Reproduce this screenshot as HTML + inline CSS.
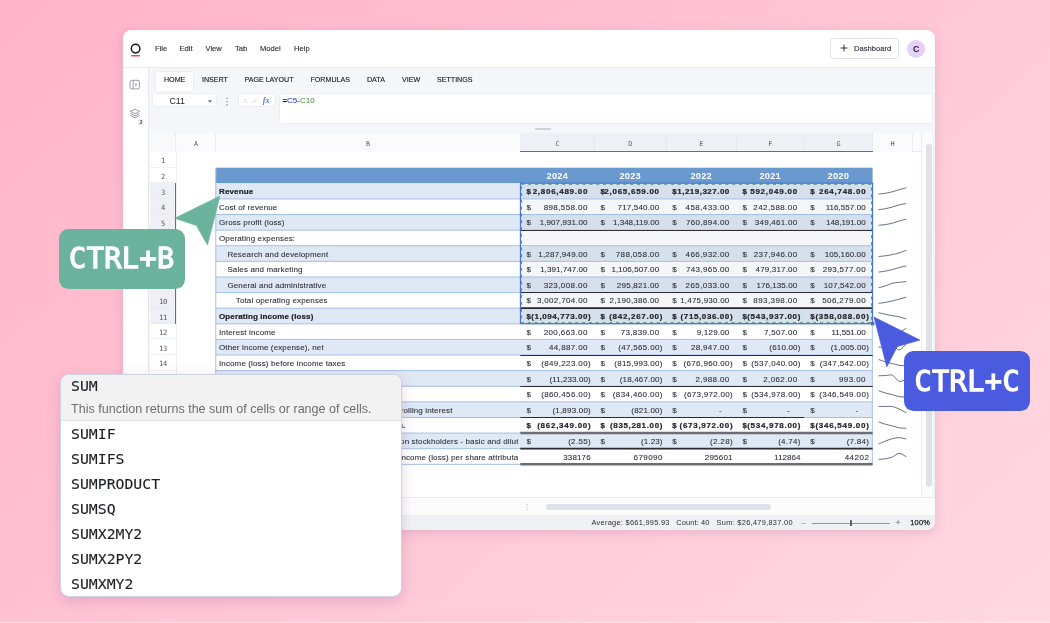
<!DOCTYPE html>
<html lang="en"><head><meta charset="utf-8"><title>Spreadsheet shortcuts</title>
<style>
*{box-sizing:border-box;margin:0;padding:0}
html,body{width:1050px;height:623px;overflow:hidden}
body{position:relative;font-family:"Liberation Sans",sans-serif;color:#1f2430;
 background:linear-gradient(138deg,#ffb3c9 0%,#ffd9e2 100%);}
.abs{position:absolute}
.menu{position:absolute;font-size:7.6px;-webkit-text-stroke:.12px #2b2f3a;color:#2b2f3a;line-height:9px;white-space:nowrap}
.tab{position:absolute;font-size:7.1px;-webkit-text-stroke:.15px #23262f;color:#23262f;line-height:9px;white-space:nowrap}
.cell{position:absolute;font-size:8px;letter-spacing:.125px;line-height:15.6px;white-space:nowrap;overflow:hidden;color:#2a2d36;padding-top:.9px}
.num{position:absolute;font-size:8px;letter-spacing:.07px;line-height:15.6px;white-space:nowrap;color:#2a2d36;text-align:right;padding-top:.9px}
.num.b{letter-spacing:.8px}
.cell,.num{-webkit-text-stroke:.1px #3a3d46}
.b{font-weight:bold;color:#23252c;-webkit-text-stroke:.22px #23252c}
.rh{position:absolute;font-family:"DejaVu Sans Mono","Liberation Mono",monospace;font-size:7.2px;letter-spacing:-.3px;padding-top:1.4px;line-height:15.6px;text-align:center;color:#555a68;background:#fff;border-bottom:1px solid #f0f1f5}
.rh.sel{background:#eff0f5;border-bottom-color:#e9ebf0}
.ch{position:absolute;font-family:"DejaVu Sans Mono","Liberation Mono",monospace;font-size:6.8px;line-height:19.6px;padding-top:1.7px;text-align:center;color:#5c6170;background:#fbfbfd;border-right:1px solid #eceef3}
.ch.sel{background:#eff0f5;border-right-color:#e6e8ee}
.fn{position:absolute;font-family:"DejaVu Sans Mono","Liberation Mono",monospace;font-size:14.8px;line-height:18px;color:#1e1f24;-webkit-text-stroke:.12px #1e1f24;white-space:nowrap}
.kbd{position:absolute;font-family:"DejaVu Sans Mono","Liberation Mono",monospace;font-weight:normal;-webkit-text-stroke:1.3px #fff;color:#fff;text-align:center;white-space:nowrap}
</style></head><body>
<div id="root" style="position:absolute;left:0;top:0;width:1050px;height:623px;will-change:transform">

<div class="abs" style="left:122.6px;top:30px;width:812.2px;height:499.8px;background:#f5f6f9;border-radius:8.5px;box-shadow:0 3px 12px rgba(130,80,140,.2)"></div>
<div class="abs" style="left:122.6px;top:30px;width:812.2px;height:38.3px;background:#fff;border-radius:9px 9px 0 0;border-bottom:1px solid #e9ebf0"></div>
<svg class="abs" style="left:129.6px;top:39.9px" width="14" height="20" viewBox="0 0 14 20"><circle cx="5.6" cy="8.6" r="4.3" fill="none" stroke="#15161a" stroke-width="1.45"/><rect x="1.1" y="15.1" width="9" height="1.3" rx=".6" fill="#f0417c"/></svg>
<span class="menu" style="left:155px;top:43.9px;">File</span>
<span class="menu" style="left:179.5px;top:43.9px;">Edit</span>
<span class="menu" style="left:205.5px;top:43.9px;">View</span>
<span class="menu" style="left:235px;top:43.9px;">Tab</span>
<span class="menu" style="left:260px;top:43.9px;">Model</span>
<span class="menu" style="left:294px;top:43.9px;">Help</span>
<div class="abs" style="left:830px;top:38px;width:69.4px;height:21px;border:1px solid #dfe2ea;border-radius:3.5px;background:#fff"></div>
<svg class="abs" style="left:838.5px;top:43px" width="10" height="10" viewBox="0 0 10 10"><path d="M5 1.5v7M1.5 5h7" stroke="#22252e" stroke-width="0.9" fill="none"/></svg>
<span class="menu" style="left:854px;top:43.5px;">Dashboard</span>
<div class="abs" style="left:907.2px;top:39.5px;width:18px;height:18px;border-radius:50%;background:linear-gradient(45deg,#d8dcff,#f1c4f4);font-size:8.8px;font-weight:bold;line-height:18.4px;text-align:center;color:#2a2440">C</div>
<div class="abs" style="left:122.6px;top:68.3px;width:26.9px;height:461.5px;background:#fff;border-right:1px solid #e6e8ee;border-radius:0 0 0 9px"></div>
<svg class="abs" style="left:129.3px;top:79.3px" width="12" height="12" viewBox="0 0 12 12"><rect x="1" y="1.3" width="9.4" height="8.6" rx="1.4" fill="none" stroke="#7f8798" stroke-width=".8"/><path d="M4.2 1.3v8.6" stroke="#7f8798" stroke-width=".8"/><path d="M6.6 4.4l1.5 1.2-1.5 1.2z" fill="none" stroke="#7f8798" stroke-width=".6"/></svg>
<svg class="abs" style="left:128.6px;top:108.3px" width="13" height="13" viewBox="0 0 13 13"><path d="M6 1.2l4.6 2.2L6 5.6 1.4 3.4z M1.4 5.5L6 7.7l4.6-2.2 M1.4 7.5L6 9.7l4.6-2.2" fill="none" stroke="#7f8798" stroke-width=".8" stroke-linejoin="round"/></svg>
<div class="abs" style="left:138.2px;top:118.6px;width:6px;height:7px;border-radius:2px;background:#eff0f4;font-size:4.8px;line-height:7px;font-weight:bold;text-align:center;color:#4b5060">2</div>
<div class="abs" style="left:155.3px;top:71.4px;width:38.7px;height:19.2px;background:#fff;border:1px solid #eceef3;border-bottom:none;border-radius:4px 4px 0 0"></div>
<span class="tab" style="left:164px;top:76px;">HOME</span>
<span class="tab" style="left:202px;top:76px;">INSERT</span>
<span class="tab" style="left:244.5px;top:76px;">PAGE LAYOUT</span>
<span class="tab" style="left:310.5px;top:76px;">FORMULAS</span>
<span class="tab" style="left:367px;top:76px;">DATA</span>
<span class="tab" style="left:402px;top:76px;">VIEW</span>
<span class="tab" style="left:437px;top:76px;">SETTINGS</span>
<div class="abs" style="left:152.2px;top:93.3px;width:64.7px;height:14.2px;background:#fff;border:1px solid #eceef3;border-radius:3px"></div>
<span class="abs" style="left:169.5px;top:96px;font-size:8.8px;line-height:10px;color:#1f2128">C11</span>
<svg class="abs" style="left:207.2px;top:98.5px" width="6" height="5" viewBox="0 0 6 5"><path d="M.9 1.2h4.2L3 3.8z" fill="#6a6f7c"/></svg>
<svg class="abs" style="left:224.6px;top:96px" width="4" height="12" viewBox="0 0 4 12"><circle cx="2" cy="2.2" r=".65" fill="#555a67"/><circle cx="2" cy="5.6" r=".65" fill="#555a67"/><circle cx="2" cy="9" r=".65" fill="#555a67"/></svg>
<div class="abs" style="left:237.8px;top:93.3px;width:38.6px;height:14.2px;background:#fff;border:1px solid #eceef3;border-radius:3px"></div>
<svg class="abs" style="left:241px;top:95px" width="34" height="12" viewBox="0 0 34 12"><path d="M2.2 3.4l4.2 4.6M6.4 3.4l-4.2 4.6" stroke="#d5d8df" stroke-width=".8" fill="none"/><path d="M10.2 6l2 2.1 3.6-4.6" stroke="#d5d8df" stroke-width=".8" fill="none"/></svg>
<span class="abs" style="left:262.8px;top:95.2px;font-family:'Liberation Serif',serif;font-style:italic;font-weight:bold;font-size:8.4px;line-height:11px;color:#5b86c9">fx</span>
<div class="abs" style="left:279.2px;top:92.8px;width:653.6px;height:31px;background:#fff;border:1px solid #eceef3;border-radius:4px"></div>
<span class="abs" style="left:282.4px;top:95.6px;font-size:8px;line-height:9px;white-space:nowrap;color:#111"><b>=</b><span style="color:#1f2bd6">C5</span>-<span style="color:#3d8a2a">C10</span></span>
<div class="abs" style="left:535px;top:127.7px;width:15.6px;height:2.2px;background:#cdd0d8;border-radius:1px"></div>
<div class="abs" style="left:150px;top:132.8px;width:771.5px;height:364.4px;background:#fff;border-top:1px solid #e9ebf0"></div>
<div class="abs" style="left:150px;top:133.4px;width:771.5px;height:19px;background:#fbfbfd;border-bottom:1px solid #e9ebf0"></div>
<div class="abs" style="left:150px;top:133.4px;width:26px;height:18.6px;background:#f9f9fb;border-right:1px solid #eceef3"></div>
<div class="ch" style="left:176.6px;top:133.4px;width:39.8px;height:18.6px;">A</div>
<div class="ch" style="left:216.4px;top:133.4px;width:304.5px;height:18.6px;">B</div>
<div class="ch sel" style="left:520.9px;top:133.4px;width:74.1px;height:18.6px;">C</div>
<div class="ch sel" style="left:595px;top:133.4px;width:71.7px;height:18.6px;">D</div>
<div class="ch sel" style="left:666.7px;top:133.4px;width:70.2px;height:18.6px;">E</div>
<div class="ch sel" style="left:736.9px;top:133.4px;width:67.8px;height:18.6px;">F</div>
<div class="ch sel" style="left:804.7px;top:133.4px;width:68.5px;height:18.6px;">G</div>
<div class="ch" style="left:873.2px;top:133.4px;width:39.8px;height:18.6px;">H</div>
<div class="abs" style="left:520.3px;top:150.8px;width:352.3px;height:1.5px;background:#3f6fd8"></div>
<div class="rh" style="left:150px;top:152.1px;width:26px;height:15.61px;">1</div>
<div class="rh" style="left:150px;top:167.71px;width:26px;height:15.61px;">2</div>
<div class="rh sel" style="left:150px;top:183.32px;width:26px;height:15.61px;">3</div>
<div class="rh sel" style="left:150px;top:198.93px;width:26px;height:15.61px;">4</div>
<div class="rh sel" style="left:150px;top:214.54px;width:26px;height:15.61px;">5</div>
<div class="rh sel" style="left:150px;top:230.15px;width:26px;height:15.61px;">6</div>
<div class="rh sel" style="left:150px;top:245.76px;width:26px;height:15.61px;">7</div>
<div class="rh sel" style="left:150px;top:261.37px;width:26px;height:15.61px;">8</div>
<div class="rh sel" style="left:150px;top:276.98px;width:26px;height:15.61px;">9</div>
<div class="rh sel" style="left:150px;top:292.59px;width:26px;height:15.61px;">10</div>
<div class="rh sel" style="left:150px;top:308.2px;width:26px;height:15.61px;">11</div>
<div class="rh" style="left:150px;top:323.81px;width:26px;height:15.61px;">12</div>
<div class="rh" style="left:150px;top:339.42px;width:26px;height:15.61px;">13</div>
<div class="rh" style="left:150px;top:355.03px;width:26px;height:15.61px;">14</div>
<div class="rh" style="left:150px;top:370.64px;width:26px;height:15.61px;">15</div>
<div class="rh" style="left:150px;top:386.25px;width:26px;height:15.61px;">16</div>
<div class="rh" style="left:150px;top:401.86px;width:26px;height:15.61px;">17</div>
<div class="rh" style="left:150px;top:417.47px;width:26px;height:15.61px;">18</div>
<div class="rh" style="left:150px;top:433.08px;width:26px;height:15.61px;">19</div>
<div class="rh" style="left:150px;top:448.69px;width:26px;height:15.61px;">20</div>
<div class="rh" style="left:150px;top:464.3px;width:26px;height:15.61px;">21</div>
<div class="abs" style="left:175.3px;top:183.32px;width:1.3px;height:140.49px;background:#3f6fd8"></div>
<div class="abs" style="left:176px;top:152px;width:0.8px;height:344px;background:#eceef3"></div>
<svg class="abs" style="left:0;top:0" width="1050" height="623" viewBox="0 0 1050 623"><rect x="215.8" y="167.71" width="656.8" height="15.61" fill="#6a99d0"/><rect x="215.8" y="183.32" width="656.8" height="15.61" fill="#dfe8f5"/><rect x="215.8" y="214.54" width="656.8" height="15.61" fill="#dfe8f5"/><rect x="215.8" y="245.76" width="656.8" height="15.61" fill="#dfe8f5"/><rect x="215.8" y="276.98" width="656.8" height="15.61" fill="#dfe8f5"/><rect x="215.8" y="308.2" width="656.8" height="15.61" fill="#dfe8f5"/><rect x="215.8" y="339.42" width="656.8" height="15.61" fill="#dfe8f5"/><rect x="215.8" y="370.64" width="656.8" height="15.61" fill="#dfe8f5"/><rect x="215.8" y="401.86" width="656.8" height="15.61" fill="#dfe8f5"/><rect x="215.8" y="433.08" width="656.8" height="15.61" fill="#dfe8f5"/><rect x="520.3" y="183.32" width="352.3" height="140.49" fill="#3c465a" fill-opacity=".05"/><path d="M215.8 198.93L872.6 198.93" stroke="#a3c0e6" stroke-width="1" fill="none"/><path d="M215.8 214.54L872.6 214.54" stroke="#a3c0e6" stroke-width="1" fill="none"/><path d="M215.8 230.15L872.6 230.15" stroke="#a3c0e6" stroke-width="1" fill="none"/><path d="M215.8 245.76L872.6 245.76" stroke="#a3c0e6" stroke-width="1" fill="none"/><path d="M215.8 261.37L872.6 261.37" stroke="#a3c0e6" stroke-width="1" fill="none"/><path d="M215.8 276.98L872.6 276.98" stroke="#a3c0e6" stroke-width="1" fill="none"/><path d="M215.8 292.59L872.6 292.59" stroke="#a3c0e6" stroke-width="1" fill="none"/><path d="M215.8 308.2L872.6 308.2" stroke="#a3c0e6" stroke-width="1" fill="none"/><path d="M215.8 323.81L872.6 323.81" stroke="#a3c0e6" stroke-width="1" fill="none"/><path d="M215.8 339.42L872.6 339.42" stroke="#a3c0e6" stroke-width="1" fill="none"/><path d="M215.8 355.03L872.6 355.03" stroke="#a3c0e6" stroke-width="1" fill="none"/><path d="M215.8 370.64L872.6 370.64" stroke="#a3c0e6" stroke-width="1" fill="none"/><path d="M215.8 386.25L872.6 386.25" stroke="#a3c0e6" stroke-width="1" fill="none"/><path d="M215.8 401.86L872.6 401.86" stroke="#a3c0e6" stroke-width="1" fill="none"/><path d="M215.8 417.47L872.6 417.47" stroke="#a3c0e6" stroke-width="1" fill="none"/><path d="M215.8 433.08L872.6 433.08" stroke="#a3c0e6" stroke-width="1" fill="none"/><path d="M215.8 448.69L872.6 448.69" stroke="#a3c0e6" stroke-width="1" fill="none"/><path d="M215.8 464.3L872.6 464.3" stroke="#a3c0e6" stroke-width="1" fill="none"/><path d="M215.8 167.71L215.8 464.3" stroke="#a3c0e6" stroke-width="1" fill="none"/><path d="M872.3 323.81L872.3 464.3" stroke="#a3c0e6" stroke-width="1" fill="none"/><path d="M520.3 230.5L872.6 230.5" stroke="#2b2d33" stroke-width="1.1" fill="none"/><path d="M520.3 292.5L872.6 292.5" stroke="#2b2d33" stroke-width="1.1" fill="none"/><path d="M520.3 308.1L872.6 308.1" stroke="#2b2d33" stroke-width="1.7" fill="none"/><path d="M520.3 355.5L872.6 355.5" stroke="#2b2d33" stroke-width="1.1" fill="none"/><path d="M520.3 386.5L872.6 386.5" stroke="#2b2d33" stroke-width="1.1" fill="none"/><path d="M520.3 417.5L804.1 417.5" stroke="#2b2d33" stroke-width="1.1" fill="none"/><path d="M520.3 432.98L872.6 432.98" stroke="#6b6e77" stroke-width="2.4" fill="none"/><path d="M520.3 448.59L872.6 448.59" stroke="#2b2d33" stroke-width="1.9" fill="none"/><path d="M520.3 464.2L872.6 464.2" stroke="#6b6e77" stroke-width="2.4" fill="none"/><rect x="520.4" y="183.22" width="352.2" height="140.49" fill="none" stroke="#3f6fd8" stroke-width="1.1"/><rect x="521.4" y="184.22" width="350.2" height="138.49" fill="none" stroke="#347d58" stroke-width=".85" stroke-dasharray="3 3.8"/><rect x="871" y="321.91" width="3.4" height="3.4" fill="#3f6fd8"/></svg>
<div class="abs" style="left:520.3px;top:168.51px;width:74.1px;height:15.61px;font-size:9.3px;letter-spacing:.2px;line-height:15.6px;font-weight:bold;color:#fff;text-align:center">2024</div>
<div class="abs" style="left:594.4px;top:168.51px;width:71.7px;height:15.61px;font-size:9.3px;letter-spacing:.2px;line-height:15.6px;font-weight:bold;color:#fff;text-align:center">2023</div>
<div class="abs" style="left:666.1px;top:168.51px;width:70.2px;height:15.61px;font-size:9.3px;letter-spacing:.2px;line-height:15.6px;font-weight:bold;color:#fff;text-align:center">2022</div>
<div class="abs" style="left:736.3px;top:168.51px;width:67.8px;height:15.61px;font-size:9.3px;letter-spacing:.2px;line-height:15.6px;font-weight:bold;color:#fff;text-align:center">2021</div>
<div class="abs" style="left:804.1px;top:168.51px;width:68.5px;height:15.61px;font-size:9.3px;letter-spacing:.2px;line-height:15.6px;font-weight:bold;color:#fff;text-align:center">2020</div>
<div class="cell b" style="left:219px;top:183.32px;width:299px;height:15.61px;">Revenue</div>
<div class="num b" style="left:526.4px;top:183.32px;width:8px;height:15.61px;text-align:left;letter-spacing:0">$</div>
<div class="num b" style="left:520.3px;top:183.32px;width:67.83px;height:15.61px;letter-spacing:0.73px">2,806,489.00</div>
<div class="num b" style="left:600.5px;top:183.32px;width:8px;height:15.61px;text-align:left;letter-spacing:0">$</div>
<div class="num b" style="left:594.4px;top:183.32px;width:65.43px;height:15.61px;letter-spacing:0.73px">2,065,659.00</div>
<div class="num b" style="left:672.2px;top:183.32px;width:8px;height:15.61px;text-align:left;letter-spacing:0">$</div>
<div class="num b" style="left:666.1px;top:183.32px;width:63.68px;height:15.61px;letter-spacing:0.48px">1,219,327.00</div>
<div class="num b" style="left:742.4px;top:183.32px;width:8px;height:15.61px;text-align:left;letter-spacing:0">$</div>
<div class="num b" style="left:736.3px;top:183.32px;width:61.56px;height:15.61px;letter-spacing:0.76px">592,049.00</div>
<div class="num b" style="left:810.2px;top:183.32px;width:8px;height:15.61px;text-align:left;letter-spacing:0">$</div>
<div class="num b" style="left:804.1px;top:183.32px;width:62.23px;height:15.61px;letter-spacing:0.73px">264,748.00</div>
<div class="cell" style="left:219px;top:198.93px;width:299px;height:15.61px;">Cost of revenue</div>
<div class="num" style="left:526.4px;top:198.93px;width:8px;height:15.61px;text-align:left;letter-spacing:0">$</div>
<div class="num" style="left:520.3px;top:198.93px;width:67.51px;height:15.61px;letter-spacing:0.41px">898,558.00</div>
<div class="num" style="left:600.5px;top:198.93px;width:8px;height:15.61px;text-align:left;letter-spacing:0">$</div>
<div class="num" style="left:594.4px;top:198.93px;width:64.86px;height:15.61px;letter-spacing:0.16px">717,540.00</div>
<div class="num" style="left:672.2px;top:198.93px;width:8px;height:15.61px;text-align:left;letter-spacing:0">$</div>
<div class="num" style="left:666.1px;top:198.93px;width:63.61px;height:15.61px;letter-spacing:0.41px">458,433.00</div>
<div class="num" style="left:742.4px;top:198.93px;width:8px;height:15.61px;text-align:left;letter-spacing:0">$</div>
<div class="num" style="left:736.3px;top:198.93px;width:61.21px;height:15.61px;letter-spacing:0.41px">242,588.00</div>
<div class="num" style="left:810.2px;top:198.93px;width:8px;height:15.61px;text-align:left;letter-spacing:0">$</div>
<div class="num" style="left:804.1px;top:198.93px;width:61.55px;height:15.61px;letter-spacing:0.05px">116,557.00</div>
<div class="cell" style="left:219px;top:214.54px;width:299px;height:15.61px;">Gross profit (loss)</div>
<div class="num" style="left:526.4px;top:214.54px;width:8px;height:15.61px;text-align:left;letter-spacing:0">$</div>
<div class="num" style="left:520.3px;top:214.54px;width:67.19px;height:15.61px;letter-spacing:0.09px">1,907,931.00</div>
<div class="num" style="left:600.5px;top:214.54px;width:8px;height:15.61px;text-align:left;letter-spacing:0">$</div>
<div class="num" style="left:594.4px;top:214.54px;width:64.7px;height:15.61px;letter-spacing:-0.01px">1,348,119.00</div>
<div class="num" style="left:672.2px;top:214.54px;width:8px;height:15.61px;text-align:left;letter-spacing:0">$</div>
<div class="num" style="left:666.1px;top:214.54px;width:63.56px;height:15.61px;letter-spacing:0.36px">760,894.00</div>
<div class="num" style="left:742.4px;top:214.54px;width:8px;height:15.61px;text-align:left;letter-spacing:0">$</div>
<div class="num" style="left:736.3px;top:214.54px;width:61.05px;height:15.61px;letter-spacing:0.25px">349,461.00</div>
<div class="num" style="left:810.2px;top:214.54px;width:8px;height:15.61px;text-align:left;letter-spacing:0">$</div>
<div class="num" style="left:804.1px;top:214.54px;width:61.44px;height:15.61px;letter-spacing:-0.06px">148,191.00</div>
<div class="cell" style="left:219px;top:230.15px;width:299px;height:15.61px;">Operating expenses:</div>
<div class="cell" style="left:227.4px;top:245.76px;width:290.6px;height:15.61px;">Research and development</div>
<div class="num" style="left:526.4px;top:245.76px;width:8px;height:15.61px;text-align:left;letter-spacing:0">$</div>
<div class="num" style="left:520.3px;top:245.76px;width:67.32px;height:15.61px;letter-spacing:0.22px">1,287,949.00</div>
<div class="num" style="left:600.5px;top:245.76px;width:8px;height:15.61px;text-align:left;letter-spacing:0">$</div>
<div class="num" style="left:594.4px;top:245.76px;width:65.06px;height:15.61px;letter-spacing:0.36px">788,058.00</div>
<div class="num" style="left:672.2px;top:245.76px;width:8px;height:15.61px;text-align:left;letter-spacing:0">$</div>
<div class="num" style="left:666.1px;top:245.76px;width:63.61px;height:15.61px;letter-spacing:0.41px">466,932.00</div>
<div class="num" style="left:742.4px;top:245.76px;width:8px;height:15.61px;text-align:left;letter-spacing:0">$</div>
<div class="num" style="left:736.3px;top:245.76px;width:61.16px;height:15.61px;letter-spacing:0.36px">237,946.00</div>
<div class="num" style="left:810.2px;top:245.76px;width:8px;height:15.61px;text-align:left;letter-spacing:0">$</div>
<div class="num" style="left:804.1px;top:245.76px;width:61.6px;height:15.61px;letter-spacing:0.1px">105,160.00</div>
<div class="cell" style="left:227.4px;top:261.37px;width:290.6px;height:15.61px;">Sales and marketing</div>
<div class="num" style="left:526.4px;top:261.37px;width:8px;height:15.61px;text-align:left;letter-spacing:0">$</div>
<div class="num" style="left:520.3px;top:261.37px;width:67.15px;height:15.61px;letter-spacing:0.05px">1,391,747.00</div>
<div class="num" style="left:600.5px;top:261.37px;width:8px;height:15.61px;text-align:left;letter-spacing:0">$</div>
<div class="num" style="left:594.4px;top:261.37px;width:64.79px;height:15.61px;letter-spacing:0.09px">1,106,507.00</div>
<div class="num" style="left:672.2px;top:261.37px;width:8px;height:15.61px;text-align:left;letter-spacing:0">$</div>
<div class="num" style="left:666.1px;top:261.37px;width:63.56px;height:15.61px;letter-spacing:0.36px">743,965.00</div>
<div class="num" style="left:742.4px;top:261.37px;width:8px;height:15.61px;text-align:left;letter-spacing:0">$</div>
<div class="num" style="left:736.3px;top:261.37px;width:60.96px;height:15.61px;letter-spacing:0.16px">479,317.00</div>
<div class="num" style="left:810.2px;top:261.37px;width:8px;height:15.61px;text-align:left;letter-spacing:0">$</div>
<div class="num" style="left:804.1px;top:261.37px;width:61.82px;height:15.61px;letter-spacing:0.32px">293,577.00</div>
<div class="cell" style="left:227.4px;top:276.98px;width:290.6px;height:15.61px;">General and administrative</div>
<div class="num" style="left:526.4px;top:276.98px;width:8px;height:15.61px;text-align:left;letter-spacing:0">$</div>
<div class="num" style="left:520.3px;top:276.98px;width:67.51px;height:15.61px;letter-spacing:0.41px">323,008.00</div>
<div class="num" style="left:600.5px;top:276.98px;width:8px;height:15.61px;text-align:left;letter-spacing:0">$</div>
<div class="num" style="left:594.4px;top:276.98px;width:64.95px;height:15.61px;letter-spacing:0.25px">295,821.00</div>
<div class="num" style="left:672.2px;top:276.98px;width:8px;height:15.61px;text-align:left;letter-spacing:0">$</div>
<div class="num" style="left:666.1px;top:276.98px;width:63.61px;height:15.61px;letter-spacing:0.41px">265,033.00</div>
<div class="num" style="left:742.4px;top:276.98px;width:8px;height:15.61px;text-align:left;letter-spacing:0">$</div>
<div class="num" style="left:736.3px;top:276.98px;width:60.85px;height:15.61px;letter-spacing:0.05px">176,135.00</div>
<div class="num" style="left:810.2px;top:276.98px;width:8px;height:15.61px;text-align:left;letter-spacing:0">$</div>
<div class="num" style="left:804.1px;top:276.98px;width:61.71px;height:15.61px;letter-spacing:0.21px">107,542.00</div>
<div class="cell" style="left:235.8px;top:292.59px;width:282.2px;height:15.61px;">Total operating expenses</div>
<div class="num" style="left:526.4px;top:292.59px;width:8px;height:15.61px;text-align:left;letter-spacing:0">$</div>
<div class="num" style="left:520.3px;top:292.59px;width:67.45px;height:15.61px;letter-spacing:0.34px">3,002,704.00</div>
<div class="num" style="left:600.5px;top:292.59px;width:8px;height:15.61px;text-align:left;letter-spacing:0">$</div>
<div class="num" style="left:594.4px;top:292.59px;width:64.95px;height:15.61px;letter-spacing:0.25px">2,190,386.00</div>
<div class="num" style="left:672.2px;top:292.59px;width:8px;height:15.61px;text-align:left;letter-spacing:0">$</div>
<div class="num" style="left:666.1px;top:292.59px;width:63.42px;height:15.61px;letter-spacing:0.22px">1,475,930.00</div>
<div class="num" style="left:742.4px;top:292.59px;width:8px;height:15.61px;text-align:left;letter-spacing:0">$</div>
<div class="num" style="left:736.3px;top:292.59px;width:61.21px;height:15.61px;letter-spacing:0.41px">893,398.00</div>
<div class="num" style="left:810.2px;top:292.59px;width:8px;height:15.61px;text-align:left;letter-spacing:0">$</div>
<div class="num" style="left:804.1px;top:292.59px;width:61.86px;height:15.61px;letter-spacing:0.36px">506,279.00</div>
<div class="cell b" style="left:219px;top:308.2px;width:299px;height:15.61px;">Operating income (loss)</div>
<div class="num b" style="left:526.4px;top:308.2px;width:8px;height:15.61px;text-align:left;letter-spacing:0">$</div>
<div class="num b" style="left:520.3px;top:308.2px;width:70.98px;height:15.61px;letter-spacing:0.57px">(1,094,773.00)</div>
<div class="num b" style="left:600.5px;top:308.2px;width:8px;height:15.61px;text-align:left;letter-spacing:0">$</div>
<div class="num b" style="left:594.4px;top:308.2px;width:68.71px;height:15.61px;letter-spacing:0.71px">(842,267.00)</div>
<div class="num b" style="left:672.2px;top:308.2px;width:8px;height:15.61px;text-align:left;letter-spacing:0">$</div>
<div class="num b" style="left:666.1px;top:308.2px;width:67.1px;height:15.61px;letter-spacing:0.6px">(715,036.00)</div>
<div class="num b" style="left:742.4px;top:308.2px;width:8px;height:15.61px;text-align:left;letter-spacing:0">$</div>
<div class="num b" style="left:736.3px;top:308.2px;width:64.81px;height:15.61px;letter-spacing:0.71px">(543,937.00)</div>
<div class="num b" style="left:810.2px;top:308.2px;width:8px;height:15.61px;text-align:left;letter-spacing:0">$</div>
<div class="num b" style="left:804.1px;top:308.2px;width:65.54px;height:15.61px;letter-spacing:0.74px">(358,088.00)</div>
<div class="cell" style="left:219px;top:323.81px;width:299px;height:15.61px;">Interest income</div>
<div class="num" style="left:526.4px;top:323.81px;width:8px;height:15.61px;text-align:left;letter-spacing:0">$</div>
<div class="num" style="left:520.3px;top:323.81px;width:67.51px;height:15.61px;letter-spacing:0.41px">200,663.00</div>
<div class="num" style="left:600.5px;top:323.81px;width:8px;height:15.61px;text-align:left;letter-spacing:0">$</div>
<div class="num" style="left:594.4px;top:323.81px;width:65.05px;height:15.61px;letter-spacing:0.35px">73,839.00</div>
<div class="num" style="left:672.2px;top:323.81px;width:8px;height:15.61px;text-align:left;letter-spacing:0">$</div>
<div class="num" style="left:666.1px;top:323.81px;width:63.39px;height:15.61px;letter-spacing:0.19px">9,129.00</div>
<div class="num" style="left:742.4px;top:323.81px;width:8px;height:15.61px;text-align:left;letter-spacing:0">$</div>
<div class="num" style="left:736.3px;top:323.81px;width:61.07px;height:15.61px;letter-spacing:0.27px">7,507.00</div>
<div class="num" style="left:810.2px;top:323.81px;width:8px;height:15.61px;text-align:left;letter-spacing:0">$</div>
<div class="num" style="left:804.1px;top:323.81px;width:61.38px;height:15.61px;letter-spacing:-0.12px">11,551.00</div>
<div class="cell" style="left:219px;top:339.42px;width:299px;height:15.61px;">Other income (expense), net</div>
<div class="num" style="left:526.4px;top:339.42px;width:8px;height:15.61px;text-align:left;letter-spacing:0">$</div>
<div class="num" style="left:520.3px;top:339.42px;width:67.45px;height:15.61px;letter-spacing:0.35px">44,887.00</div>
<div class="num" style="left:600.5px;top:339.42px;width:8px;height:15.61px;text-align:left;letter-spacing:0">$</div>
<div class="num" style="left:594.4px;top:339.42px;width:68.33px;height:15.61px;letter-spacing:0.33px">(47,565.00)</div>
<div class="num" style="left:672.2px;top:339.42px;width:8px;height:15.61px;text-align:left;letter-spacing:0">$</div>
<div class="num" style="left:666.1px;top:339.42px;width:63.55px;height:15.61px;letter-spacing:0.35px">28,947.00</div>
<div class="num" style="left:742.4px;top:339.42px;width:8px;height:15.61px;text-align:left;letter-spacing:0">$</div>
<div class="num" style="left:736.3px;top:339.42px;width:64.28px;height:15.61px;letter-spacing:0.18px">(610.00)</div>
<div class="num" style="left:810.2px;top:339.42px;width:8px;height:15.61px;text-align:left;letter-spacing:0">$</div>
<div class="num" style="left:804.1px;top:339.42px;width:65px;height:15.61px;letter-spacing:0.2px">(1,005.00)</div>
<div class="cell" style="left:219px;top:355.03px;width:299px;height:15.61px;">Income (loss) before income taxes</div>
<div class="num" style="left:526.4px;top:355.03px;width:8px;height:15.61px;text-align:left;letter-spacing:0">$</div>
<div class="num" style="left:520.3px;top:355.03px;width:70.78px;height:15.61px;letter-spacing:0.38px">(849,223.00)</div>
<div class="num" style="left:600.5px;top:355.03px;width:8px;height:15.61px;text-align:left;letter-spacing:0">$</div>
<div class="num" style="left:594.4px;top:355.03px;width:68.25px;height:15.61px;letter-spacing:0.25px">(815,993.00)</div>
<div class="num" style="left:672.2px;top:355.03px;width:8px;height:15.61px;text-align:left;letter-spacing:0">$</div>
<div class="num" style="left:666.1px;top:355.03px;width:66.84px;height:15.61px;letter-spacing:0.34px">(676,960.00)</div>
<div class="num" style="left:742.4px;top:355.03px;width:8px;height:15.61px;text-align:left;letter-spacing:0">$</div>
<div class="num" style="left:736.3px;top:355.03px;width:64.44px;height:15.61px;letter-spacing:0.34px">(537,040.00)</div>
<div class="num" style="left:810.2px;top:355.03px;width:8px;height:15.61px;text-align:left;letter-spacing:0">$</div>
<div class="num" style="left:804.1px;top:355.03px;width:65.14px;height:15.61px;letter-spacing:0.34px">(347,542.00)</div>
<div class="cell" style="left:219px;top:370.64px;width:299px;height:15.61px;">Provision for (benefit from) income taxes</div>
<div class="num" style="left:526.4px;top:370.64px;width:8px;height:15.61px;text-align:left;letter-spacing:0">$</div>
<div class="num" style="left:520.3px;top:370.64px;width:70.49px;height:15.61px;letter-spacing:0.09px">(11,233.00)</div>
<div class="num" style="left:600.5px;top:370.64px;width:8px;height:15.61px;text-align:left;letter-spacing:0">$</div>
<div class="num" style="left:594.4px;top:370.64px;width:68.19px;height:15.61px;letter-spacing:0.18px">(18,467.00)</div>
<div class="num" style="left:672.2px;top:370.64px;width:8px;height:15.61px;text-align:left;letter-spacing:0">$</div>
<div class="num" style="left:666.1px;top:370.64px;width:63.58px;height:15.61px;letter-spacing:0.38px">2,988.00</div>
<div class="num" style="left:742.4px;top:370.64px;width:8px;height:15.61px;text-align:left;letter-spacing:0">$</div>
<div class="num" style="left:736.3px;top:370.64px;width:61.18px;height:15.61px;letter-spacing:0.38px">2,062.00</div>
<div class="num" style="left:810.2px;top:370.64px;width:8px;height:15.61px;text-align:left;letter-spacing:0">$</div>
<div class="num" style="left:804.1px;top:370.64px;width:61.92px;height:15.61px;letter-spacing:0.42px">993.00</div>
<div class="cell" style="left:219px;top:386.25px;width:299px;height:15.61px;">Net income (loss)</div>
<div class="num" style="left:526.4px;top:386.25px;width:8px;height:15.61px;text-align:left;letter-spacing:0">$</div>
<div class="num" style="left:520.3px;top:386.25px;width:70.78px;height:15.61px;letter-spacing:0.38px">(860,456.00)</div>
<div class="num" style="left:600.5px;top:386.25px;width:8px;height:15.61px;text-align:left;letter-spacing:0">$</div>
<div class="num" style="left:594.4px;top:386.25px;width:68.38px;height:15.61px;letter-spacing:0.38px">(834,460.00)</div>
<div class="num" style="left:672.2px;top:386.25px;width:8px;height:15.61px;text-align:left;letter-spacing:0">$</div>
<div class="num" style="left:666.1px;top:386.25px;width:66.8px;height:15.61px;letter-spacing:0.3px">(673,972.00)</div>
<div class="num" style="left:742.4px;top:386.25px;width:8px;height:15.61px;text-align:left;letter-spacing:0">$</div>
<div class="num" style="left:736.3px;top:386.25px;width:64.44px;height:15.61px;letter-spacing:0.34px">(534,978.00)</div>
<div class="num" style="left:810.2px;top:386.25px;width:8px;height:15.61px;text-align:left;letter-spacing:0">$</div>
<div class="num" style="left:804.1px;top:386.25px;width:65.18px;height:15.61px;letter-spacing:0.38px">(346,549.00)</div>
<div class="cell" style="left:231.19px;top:401.86px;width:286.81px;height:15.61px;">Less: net income (loss) attributable to noncontrolling interest</div>
<div class="num" style="left:526.4px;top:401.86px;width:8px;height:15.61px;text-align:left;letter-spacing:0">$</div>
<div class="num" style="left:520.3px;top:401.86px;width:70.6px;height:15.61px;letter-spacing:0.2px">(1,893.00)</div>
<div class="num" style="left:600.5px;top:401.86px;width:8px;height:15.61px;text-align:left;letter-spacing:0">$</div>
<div class="num" style="left:594.4px;top:401.86px;width:68.18px;height:15.61px;letter-spacing:0.18px">(821.00)</div>
<div class="num" style="left:672.2px;top:401.86px;width:8px;height:15.61px;text-align:left;letter-spacing:0">$</div>
<div class="num" style="left:666.1px;top:401.86px;width:56.64px;height:15.61px;letter-spacing:0.94px">-</div>
<div class="num" style="left:742.4px;top:401.86px;width:8px;height:15.61px;text-align:left;letter-spacing:0">$</div>
<div class="num" style="left:736.3px;top:401.86px;width:54.24px;height:15.61px;letter-spacing:0.94px">-</div>
<div class="num" style="left:810.2px;top:401.86px;width:8px;height:15.61px;text-align:left;letter-spacing:0">$</div>
<div class="num" style="left:804.1px;top:401.86px;width:54.94px;height:15.61px;letter-spacing:0.94px">-</div>
<div class="cell b" style="left:219.31px;top:417.47px;width:298.69px;height:15.61px;">Net income (loss) attributable to Snowflake Inc.</div>
<div class="num b" style="left:526.4px;top:417.47px;width:8px;height:15.61px;text-align:left;letter-spacing:0">$</div>
<div class="num b" style="left:520.3px;top:417.47px;width:71.14px;height:15.61px;letter-spacing:0.74px">(862,349.00)</div>
<div class="num b" style="left:600.5px;top:417.47px;width:8px;height:15.61px;text-align:left;letter-spacing:0">$</div>
<div class="num b" style="left:594.4px;top:417.47px;width:68.63px;height:15.61px;letter-spacing:0.63px">(835,281.00)</div>
<div class="num b" style="left:672.2px;top:417.47px;width:8px;height:15.61px;text-align:left;letter-spacing:0">$</div>
<div class="num b" style="left:666.1px;top:417.47px;width:67.18px;height:15.61px;letter-spacing:0.69px">(673,972.00)</div>
<div class="num b" style="left:742.4px;top:417.47px;width:8px;height:15.61px;text-align:left;letter-spacing:0">$</div>
<div class="num b" style="left:736.3px;top:417.47px;width:64.81px;height:15.61px;letter-spacing:0.71px">(534,978.00)</div>
<div class="num b" style="left:810.2px;top:417.47px;width:8px;height:15.61px;text-align:left;letter-spacing:0">$</div>
<div class="num b" style="left:804.1px;top:417.47px;width:65.54px;height:15.61px;letter-spacing:0.74px">(346,549.00)</div>
<div class="cell" style="left:221.15px;top:433.08px;width:296.85px;height:15.61px;">Net income (loss) per share attributable to common stockholders - basic and diluted</div>
<div class="num" style="left:526.4px;top:433.08px;width:8px;height:15.61px;text-align:left;letter-spacing:0">$</div>
<div class="num" style="left:520.3px;top:433.08px;width:70.73px;height:15.61px;letter-spacing:0.33px">(2.55)</div>
<div class="num" style="left:600.5px;top:433.08px;width:8px;height:15.61px;text-align:left;letter-spacing:0">$</div>
<div class="num" style="left:594.4px;top:433.08px;width:68.08px;height:15.61px;letter-spacing:0.08px">(1.23)</div>
<div class="num" style="left:672.2px;top:433.08px;width:8px;height:15.61px;text-align:left;letter-spacing:0">$</div>
<div class="num" style="left:666.1px;top:433.08px;width:66.83px;height:15.61px;letter-spacing:0.33px">(2.28)</div>
<div class="num" style="left:742.4px;top:433.08px;width:8px;height:15.61px;text-align:left;letter-spacing:0">$</div>
<div class="num" style="left:736.3px;top:433.08px;width:64.36px;height:15.61px;letter-spacing:0.26px">(4.74)</div>
<div class="num" style="left:810.2px;top:433.08px;width:8px;height:15.61px;text-align:left;letter-spacing:0">$</div>
<div class="num" style="left:804.1px;top:433.08px;width:65.06px;height:15.61px;letter-spacing:0.26px">(7.84)</div>
<div class="cell" style="left:219.56px;top:448.69px;width:298.44px;height:15.61px;">Weighted-average shares used in computing net income (loss) per share attributable to</div>
<div class="num" style="left:520.3px;top:448.69px;width:70.57px;height:15.61px;letter-spacing:0.17px">338176</div>
<div class="num" style="left:594.4px;top:448.69px;width:68.43px;height:15.61px;letter-spacing:0.43px">679090</div>
<div class="num" style="left:666.1px;top:448.69px;width:66.74px;height:15.61px;letter-spacing:0.24px">295601</div>
<div class="num" style="left:736.3px;top:448.69px;width:64.09px;height:15.61px;letter-spacing:-0.01px">112864</div>
<div class="num" style="left:804.1px;top:448.69px;width:65.3px;height:15.61px;letter-spacing:0.5px">44202</div>
<svg class="abs" style="left:0;top:0" width="1050" height="623" viewBox="0 0 1050 623"><path d="M879 194.02C880.08 193.89 883.58 193.6 885.73 193.23C887.88 192.87 890.31 192.29 892.46 191.73C894.61 191.16 897.04 190.31 899.19 189.7C901.34 189.09 904.84 188.2 905.92 187.92M879 209.63C880.08 209.47 883.58 209.07 885.73 208.65C887.88 208.22 890.31 207.56 892.46 206.96C894.61 206.37 897.04 205.49 899.19 204.94C901.34 204.39 904.84 203.76 905.92 203.53M879 225.24C880.08 225.13 883.58 224.88 885.73 224.54C887.88 224.2 890.31 223.67 892.46 223.12C894.61 222.56 897.04 221.72 899.19 221.08C901.34 220.44 904.84 219.45 905.92 219.14M879 256.46C880.08 256.35 883.58 256.07 885.73 255.78C887.88 255.48 890.31 255.05 892.46 254.59C894.61 254.14 897.04 253.62 899.19 252.94C901.34 252.26 904.84 250.77 905.92 250.36M879 272.07C880.08 271.9 883.58 271.44 885.73 271.04C887.88 270.64 890.31 270.13 892.46 269.57C894.61 269.01 897.04 268.13 899.19 267.55C901.34 266.98 904.84 266.22 905.92 265.97M879 287.68C880.08 287.37 883.58 286.45 885.73 285.74C887.88 285.02 890.31 283.76 892.46 283.22C894.61 282.68 897.04 282.61 899.19 282.35C901.34 282.09 904.84 281.7 905.92 281.58M879 303.29C880.08 303.14 883.58 302.72 885.73 302.34C887.88 301.96 890.31 301.43 892.46 300.92C894.61 300.41 897.04 299.77 899.19 299.17C901.34 298.58 904.84 297.51 905.92 297.19M879 312.8C880.08 313.05 883.58 313.87 885.73 314.34C887.88 314.81 890.31 315.36 892.46 315.76C894.61 316.15 897.04 316.31 899.19 316.81C901.34 317.31 904.84 318.57 905.92 318.9M879 334.38C880.08 334.4 883.58 334.5 885.73 334.51C887.88 334.52 890.31 334.79 892.46 334.46C894.61 334.12 897.04 333.38 899.19 332.42C901.34 331.45 904.84 329.05 905.92 328.41M879 347.05C880.08 347.04 883.58 347.34 885.73 347.02C887.88 346.71 890.31 344.58 892.46 345.07C894.61 345.57 897.04 350.29 899.19 350.12C901.34 349.95 904.84 345 905.92 344.02M879 359.63C880.08 360 883.58 361.29 885.73 361.93C887.88 362.57 890.31 363.09 892.46 363.64C894.61 364.18 897.04 364.99 899.19 365.33C901.34 365.66 904.84 365.67 905.92 365.73M879 375.81C880.08 375.76 883.58 375.59 885.73 375.5C887.88 375.41 890.31 374.31 892.46 375.24C894.61 376.17 897.04 380.69 899.19 381.34C901.34 381.99 904.84 379.61 905.92 379.28M879 390.85C880.08 391.21 883.58 392.46 885.73 393.09C887.88 393.71 890.31 394.17 892.46 394.74C894.61 395.31 897.04 396.29 899.19 396.64C901.34 397 904.84 396.9 905.92 396.95M879 406.46C880.08 406.46 883.58 406.46 885.73 406.46C887.88 406.46 890.31 406.04 892.46 406.46C894.61 406.88 897.04 408.13 899.19 409.11C901.34 410.08 904.84 412.01 905.92 412.56M879 422.07C880.08 422.43 883.58 423.68 885.73 424.3C887.88 424.92 890.31 425.37 892.46 425.94C894.61 426.51 897.04 427.49 899.19 427.85C901.34 428.21 904.84 428.12 905.92 428.17M879 443.78C880.08 443.32 883.58 441.74 885.73 440.92C887.88 440.1 890.31 439.17 892.46 438.65C894.61 438.13 897.04 437.64 899.19 437.68C901.34 437.72 904.84 438.7 905.92 438.9M879 459.39C880.08 459.28 883.58 459.12 885.73 458.73C887.88 458.34 890.31 457.85 892.46 456.97C894.61 456.1 897.04 453.36 899.19 453.29C901.34 453.22 904.84 456.04 905.92 456.57" fill="none" stroke="#3f4b6b" stroke-width=".8" stroke-linejoin="round" stroke-linecap="round"/></svg>
<div class="abs" style="left:921px;top:133px;width:14px;height:364px;background:linear-gradient(to right,#fcfcfd 0,#fcfcfd 11px,#f1f2f6 11px);border-left:1px solid #eceef3"></div>
<div class="abs" style="left:926px;top:144px;width:6px;height:342.6px;background:#e0e2ea;border-radius:3px"></div>
<div class="abs" style="left:150px;top:497px;width:785px;height:18.5px;background:#fcfcfd;border-top:1px solid #e9eaf0"></div>
<svg class="abs" style="left:525px;top:502.5px" width="4" height="8" viewBox="0 0 4 8"><circle cx="2" cy="1.4" r=".6" fill="#b4b8c4"/><circle cx="2" cy="4" r=".6" fill="#b4b8c4"/><circle cx="2" cy="6.6" r=".6" fill="#b4b8c4"/></svg>
<div class="abs" style="left:545.8px;top:503.5px;width:225.2px;height:6px;background:#e0e2ea;border-radius:3px"></div>
<div class="abs" style="left:150px;top:515.3px;width:785px;height:14.5px;background:#f0f1f5;border-radius:0 0 8.5px 0"></div>
<span class="abs" style="left:591.5px;top:518.1px;letter-spacing:.28px;font-size:7.4px;line-height:9px;white-space:nowrap;color:#2a2d36">Average: $661,995.93</span>
<span class="abs" style="left:676.3px;top:518.1px;letter-spacing:.14px;font-size:7.4px;line-height:9px;white-space:nowrap;color:#2a2d36">Count: 40</span>
<span class="abs" style="left:716.6px;top:518.1px;letter-spacing:.29px;font-size:7.4px;line-height:9px;white-space:nowrap;color:#2a2d36">Sum: $26,479,837.00</span>
<span class="abs" style="left:801.6px;top:518px;font-size:7.8px;line-height:9px;color:#7b8090">&#8211;</span>
<div class="abs" style="left:812px;top:523px;width:78px;height:0.9px;background:#8e95a3"></div>
<div class="abs" style="left:849.9px;top:519.7px;width:2.6px;height:6.6px;background:#5a6070;border-radius:.6px"></div>
<svg class="abs" style="left:895px;top:519px" width="7" height="7" viewBox="0 0 7 7"><path d="M3.1 1v4.6M.8 3.3h4.6" stroke="#7b8090" stroke-width=".7" fill="none"/></svg>
<span class="abs" style="left:910.3px;top:518.1px;font-size:7.4px;letter-spacing:.2px;line-height:9px;color:#23262e;-webkit-text-stroke:.25px #23262e">100%</span>
<div class="abs" style="left:60px;top:373.5px;width:341.8px;height:223.4px;background:#fff;border:1.2px solid #cdd3e0;border-radius:9px;box-shadow:0 4px 14px rgba(130,70,130,.22);overflow:hidden"><div style="position:absolute;left:0;top:0;width:100%;height:46.4px;background:#f2f2f3;border-bottom:1px solid #e0e1e6"></div></div>
<span class="fn" style="left:71px;top:376.6px;">SUM</span>
<span class="abs" style="left:71px;top:402px;font-size:12.55px;line-height:15px;color:#6e6e70;white-space:nowrap">This function returns the sum of cells or range of cells.</span>
<span class="fn" style="left:71px;top:425.2px;">SUMIF</span>
<span class="fn" style="left:71px;top:450.2px;">SUMIFS</span>
<span class="fn" style="left:71px;top:475.2px;">SUMPRODUCT</span>
<span class="fn" style="left:71px;top:500.2px;">SUMSQ</span>
<span class="fn" style="left:71px;top:525.2px;">SUMX2MY2</span>
<span class="fn" style="left:71px;top:550.2px;">SUMX2PY2</span>
<span class="fn" style="left:71px;top:575.2px;">SUMXMY2</span>
<svg class="abs" style="left:0;top:0" width="1050" height="623" viewBox="0 0 1050 623"><path d="M174.6 218.3 L220 195.9 L207.5 245.2 L196.4 225.6 Z" fill="#6bb39c" stroke="#6bb39c" stroke-width=".6" stroke-linejoin="round"/><path d="M874 317 L920 340.1 L897.3 346.6 L886.8 366.9 Z" fill="#4b5be0" stroke="#4b5be0" stroke-width=".6" stroke-linejoin="round"/></svg>
<div class="kbd" style="left:58.5px;top:228.7px;width:126.3px;height:60px;background:#6bb39c;border-radius:9.5px;font-size:28.5px;line-height:60px;letter-spacing:.45px;text-indent:.45px">CTRL+B</div>
<div class="kbd" style="left:904px;top:350.6px;width:126px;height:60px;background:#4b5be0;border-radius:9.5px;font-size:28.5px;line-height:61px;letter-spacing:.45px;text-indent:.45px">CTRL+C</div>
<div class="abs" style="left:0px;top:621.8px;width:1050px;height:1.2px;background:linear-gradient(to bottom,rgba(255,255,255,0),rgba(255,255,255,.75))"></div>
</div>
</body></html>
